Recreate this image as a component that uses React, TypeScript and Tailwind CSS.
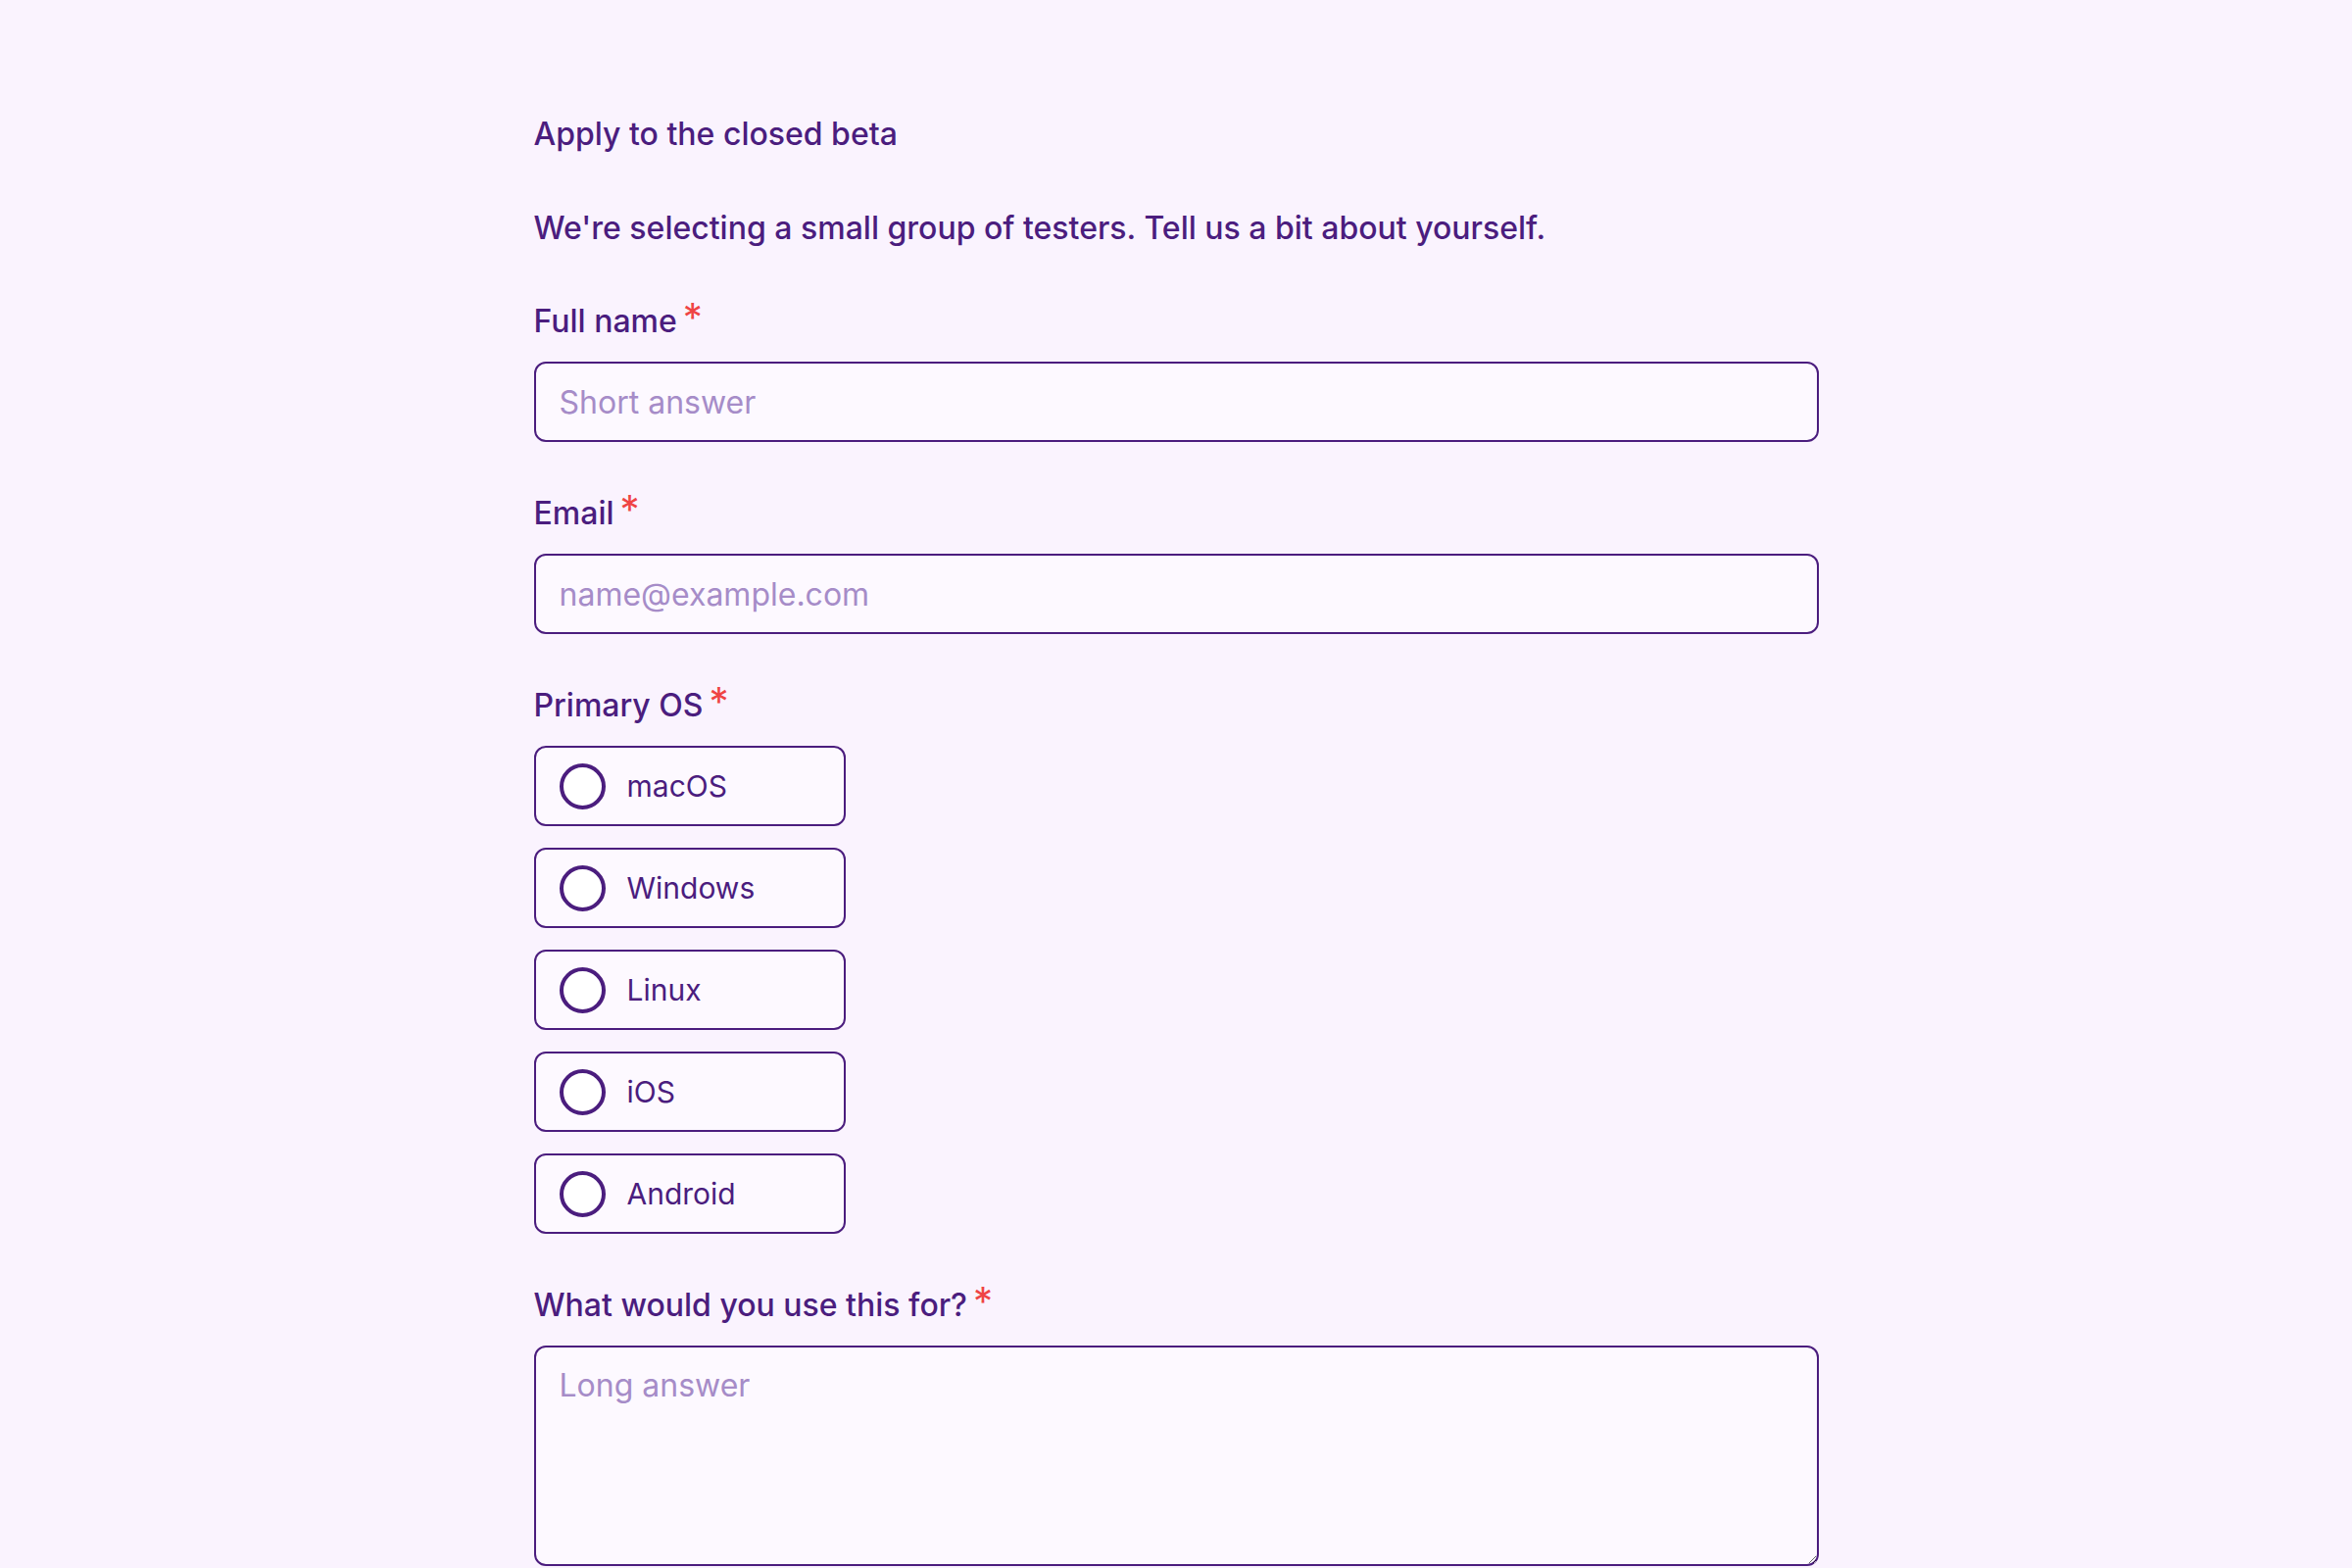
import React from 'react';

const OPTIONS = ['macOS', 'Windows', 'Linux', 'iOS', 'Android'];

const Label = ({ children }: { children: React.ReactNode }) => (
    <label className="flex items-start h-[42px] leading-[42px] text-[32px] font-medium text-[#4b1d7e]">
        <span>{children}</span>
        <span className="ml-[6px] text-[40px] font-normal text-[#ef4444] leading-[34px]">*</span>
    </label>
);

export default function App() {
    return (
        <div
            className="min-h-[1600px] w-full bg-[#faf3fe]"
            style={{ fontFamily: 'Inter, "Noto Sans", sans-serif' }}
        >
            <form className="w-[1311px] mx-auto pt-[116px] flex flex-col" onSubmit={e => e.preventDefault()}>
                <h1 className="h-[42px] leading-[42px] text-[32px] font-medium text-[#4b1d7e]">
                    Apply to the closed beta
                </h1>
                <p className="mt-[54px] h-[42px] leading-[42px] text-[32px] font-medium text-[#4b1d7e]">
                    We're selecting a small group of testers. Tell us a bit about yourself.
                </p>

                {/* Full name */}
                <div className="mt-[53px] flex flex-col gap-[20px]">
                    <Label>Full name</Label>
                    <input
                        type="text"
                        placeholder="Short answer"
                        className="h-[82px] w-full rounded-[12px] border-2 border-[#4b1d7e] bg-[#fdf9ff] px-[24px] text-[32px] text-[#4b1d7e] placeholder:text-[#a68cc8] outline-none"
                    />
                </div>

                {/* Email */}
                <div className="mt-[52px] flex flex-col gap-[20px]">
                    <Label>Email</Label>
                    <input
                        type="email"
                        placeholder="name@example.com"
                        className="h-[82px] w-full rounded-[12px] border-2 border-[#4b1d7e] bg-[#fdf9ff] px-[24px] text-[32px] text-[#4b1d7e] placeholder:text-[#a68cc8] outline-none"
                    />
                </div>

                {/* Primary OS */}
                <div className="mt-[52px] flex flex-col gap-[20px]">
                    <Label>Primary OS</Label>
                    <div className="flex flex-col gap-[22px]">
                        {OPTIONS.map(opt => (
                            <label
                                key={opt}
                                className="flex items-center gap-[22px] h-[82px] w-[318px] rounded-[12px] border-2 border-[#4b1d7e] bg-[#fdf9ff] px-[24px] cursor-pointer"
                            >
                                <span className="w-[47px] h-[47px] rounded-full border-4 border-[#4b1d7e] bg-white shrink-0" />
                                <span className="text-[30px] text-[#4b1d7e]">{opt}</span>
                            </label>
                        ))}
                    </div>
                </div>

                {/* Use case */}
                <div className="mt-[52px] flex flex-col gap-[20px]">
                    <Label>What would you use this for?</Label>
                    <textarea
                        placeholder="Long answer"
                        className="h-[225px] w-full rounded-[12px] border-2 border-[#4b1d7e] bg-[#fdf9ff] px-[24px] pt-[18px] leading-[42px] text-[32px] text-[#4b1d7e] placeholder:text-[#a68cc8] outline-none"
                    />
                </div>
            </form>
        </div>
    );
}
